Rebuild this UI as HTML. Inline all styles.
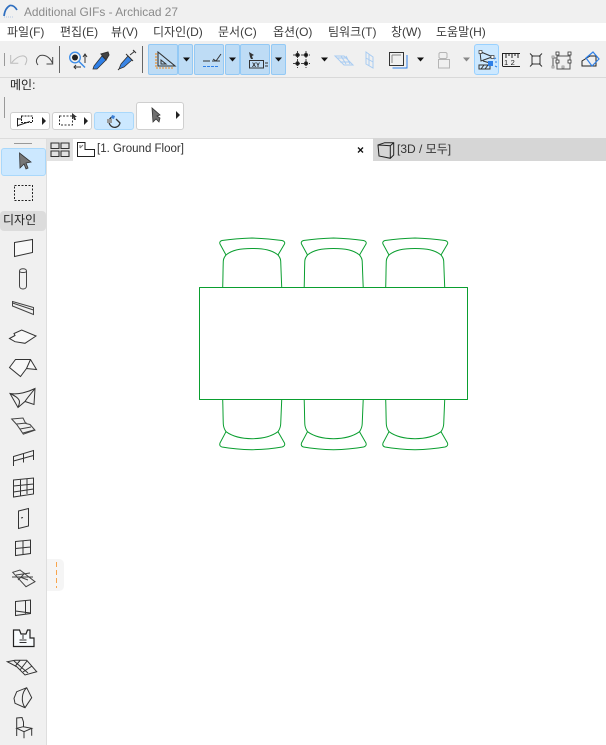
<!DOCTYPE html>
<html><head><meta charset="utf-8"><style>
html,body{margin:0;padding:0;background:#fff}
#p{position:relative;width:606px;height:745px;overflow:hidden;background:#fff;font-family:"Liberation Sans","Noto Sans CJK KR",sans-serif}
#p div{position:absolute}
.t{white-space:nowrap;font-size:12px;line-height:16px;color:#3c3c3c}
.b{background:#bedcf5;border:1px solid #93c9f5;border-radius:2px;box-sizing:border-box}
.w{background:#fff;border:1px solid #cfcfcf;border-radius:3px;box-sizing:border-box}
svg{position:absolute;left:0;top:0}
</style></head><body><div id="p">
<div style="left:0;top:0;width:606px;height:23px;background:#f0f0f0"></div>
<div style="left:0;top:41px;width:606px;height:97px;background:#f0f0f0"></div>
<div style="left:0;top:77px;width:606px;height:1px;background:#d9d9d9"></div>
<div style="left:0;top:138px;width:606px;height:1px;background:#dcdcdc"></div>
<div style="left:0;top:139px;width:46px;height:606px;background:#f0f0f0"></div>
<div style="left:46px;top:139px;width:1px;height:606px;background:#dedede"></div>
<div style="left:47px;top:139px;width:26px;height:22px;background:#e2e2e2"></div>
<div style="left:373px;top:138px;width:233px;height:23px;background:#d6d6d6"></div>
<div class="t" style="left:24px;top:4px;font-size:11.9px;color:#8a8a8a">Additional GIFs - Archicad 27</div>
<div class="t" style="left:7px;top:24px">파일(F)</div>
<div class="t" style="left:60px;top:24px">편집(E)</div>
<div class="t" style="left:111px;top:24px">뷰(V)</div>
<div class="t" style="left:153px;top:24px">디자인(D)</div>
<div class="t" style="left:218px;top:24px">문서(C)</div>
<div class="t" style="left:273px;top:24px">옵션(O)</div>
<div class="t" style="left:328px;top:24px">팀워크(T)</div>
<div class="t" style="left:391px;top:24px">창(W)</div>
<div class="t" style="left:436px;top:24px">도움말(H)</div>
<div class="b" style="left:148px;top:44px;width:30px;height:31px"></div>
<div class="b" style="left:178px;top:44px;width:15px;height:31px"></div>
<div class="b" style="left:194px;top:44px;width:30px;height:31px"></div>
<div class="b" style="left:225px;top:44px;width:15px;height:31px"></div>
<div class="b" style="left:240px;top:44px;width:30px;height:31px"></div>
<div class="b" style="left:271px;top:44px;width:15px;height:31px"></div>
<div class="b" style="left:474px;top:44px;width:25px;height:31px;background:#cce8ff;border-color:#99d1ff;border-radius:3px"></div>
<div class="t" style="left:10px;top:77px;color:#222">메인:</div>
<div class="w" style="left:10px;top:112px;width:40px;height:18px"></div>
<div class="w" style="left:52px;top:112px;width:40px;height:18px"></div>
<div class="w" style="left:94px;top:112px;width:40px;height:18px;background:#cce8ff;border-color:#a9d8fb"></div>
<div class="w" style="left:136px;top:102px;width:48px;height:28px"></div>
<div style="left:1px;top:148px;width:45px;height:28px;background:#cce8ff;border:1px solid #a9d8fb;border-radius:3px;box-sizing:border-box"></div>
<div style="left:0;top:211px;width:46px;height:20px;background:#dcdcdc;border-radius:4px"></div>
<div class="t" style="left:3px;top:212px;color:#222">디자인</div>
<div class="t" style="left:97px;top:141px;color:#333;font-size:11.5px">[1. Ground Floor]</div>
<div class="t" style="left:397px;top:141px;color:#333;font-size:12px">[3D / 모두]</div>
<div style="left:47px;top:559px;width:17px;height:32px;background:#f5f5f5;border-radius:0 5px 5px 0"></div>
<svg width="606" height="745" viewBox="0 0 606 745" fill="none" stroke="#333" stroke-width="1">
<!-- logo -->
<path d="M4 16Q5 8 10 5.500Q14 5 17 10" stroke="#2f6fc0" stroke-width="1.700"/>
<path d="M4 17h9" stroke="#c8d6e8" stroke-dasharray="1 1" stroke-width="1.500"/>
<!-- separators -->
<path d="M4.500 53v13M4.500 97v21" stroke="#999"/>
<path d="M59.500 46v27M142.500 46v27" stroke="#666"/>
<!-- undo redo -->
<path d="M10.700 55v8.300h7.600M11.700 62.700Q18 55 24 56Q29 58 25 65" stroke="#bcbcbc"/>
<path d="M38 65Q34 60 40 55.500Q48 54 52.500 63M52.700 57v7h-6.200" stroke="#444"/>
<!-- find -->
<circle cx="75" cy="57.500" r="5.300" stroke="#3b8ce8" stroke-width="1.300"/><circle cx="75" cy="57.500" r="3" fill="#222" stroke="none"/>
<path d="M79 61.500l6 6" stroke="#3b8ce8" stroke-width="1.500"/><path d="M85 55v8M83 57l2-3 2 3M74 67h7M76 65l-2 2 2 2" stroke="#333"/>
<!-- eyedropper -->
<path d="M94 66l8-10 4 4-9 9-4 0z" fill="#2f80e8" stroke="#333" stroke-width=".8"/><path d="M101 54l7-2 1 3-3 5z" fill="#444" stroke="#333"/>
<!-- syringe -->
<path d="M119 69l2-5 7-8 4 4-8 7z" fill="#3a85e5" stroke="#333" stroke-width=".8"/><path d="M126 54l7 7M130 55l5-4M133 50l3 3M119 69l-1 1" stroke="#333"/>
<!-- triangle ruler -->
<path d="M158 52v14h17z" stroke="#333" stroke-width="1.100"/><path d="M161 60v4h5z" stroke="#333"/><path d="M156 53v15h18" stroke="#f08a1c" stroke-dasharray="2 1" stroke-width="1.100"/>
<!-- guide -->
<path d="M203 61h7M212 61h8M213 59l3 2 5-7" stroke="#333"/><path d="M203 66.500h16" stroke="#2f80e8" stroke-dasharray="3 1"/>
<!-- XY -->
<path d="M249 52l5 3-2 1 1 3-2 0-1-2z" fill="#333" stroke="none"/><rect x="249.500" y="60.500" width="14" height="7.500" stroke="#333"/>
<path d="M265 63h3M265 66h3" stroke="#333"/>
<text x="252" y="67" font-size="6" font-weight="bold" fill="#222" stroke="none" font-family="Liberation Sans,sans-serif">XY</text>
<!-- arrows -->
<path fill="#111" stroke="none" d="M183 57.500h7l-3.500 4zM229 57.500h7l-3.500 4zM275 57.500h7l-3.500 4zM321 57.500h7l-3.500 4zM417 57.500h7l-3.500 4z"/>
<path fill="#888" stroke="none" d="M463 57.500h7l-3.500 4z"/>
<!-- grid -->
<path d="M297.500 51v17M306 51v17M293 55h17M293 63.500h17" stroke="#444" stroke-dasharray="3 1"/><circle cx="297.500" cy="55" r="1.700" fill="#111"/><circle cx="306" cy="55" r="1.700" fill="#111"/><circle cx="297.500" cy="63.500" r="1.700" fill="#111"/><circle cx="306" cy="63.500" r="1.700" fill="#111"/>
<!-- plane -->
<path d="M335 56h9l9 9h-9zM337 58h10M340 62h10M341 56l5 8M346 56l4 8" stroke="#a9ccf2"/>
<path d="M366 52l7 5v11l-7-4zM369 54v12M366 58l7 4" stroke="#a9ccf2"/>
<!-- box -->
<rect x="389.500" y="52.500" width="14" height="13" stroke="#333"/><path d="M392 55h9M392 55v8" stroke="#888"/><path d="M407 55v13h-14.500" stroke="#2f80e8"/>
<!-- lock/weight -->
<path d="M440 52.500h6l1 1v4l-1 1h-6l-1-1v-4zM438.500 59.500h11v8.500h-11z" stroke="#b5b5b5"/>
<!-- active wall -->
<path d="M481 52l12 5M480 52l1 9 11-4M483 61l7 2" stroke="#333"/><rect x="479" y="50.500" width="3" height="3" fill="#fff" stroke="#333" stroke-width=".7"/><rect x="491" y="55.500" width="3" height="3" fill="#fff" stroke="#333" stroke-width=".7"/>
<path d="M479 65h11v4h-11zM481 69l3-4M485 69l3-4" stroke="#333"/><rect x="488" y="61" width="5" height="5" fill="#2f80e8" stroke="none"/><path d="M495 62h2M495 66l2 1M494 59l2-1" stroke="#2f80e8"/>
<!-- ruler 12 -->
<path d="M502.500 66V53.500h17.500M502.500 66.500h17.500" stroke="#222"/><path d="M506 54v4M509 54v2M512 54v4M515 54v2M518 54v4" stroke="#222"/>
<text x="504" y="65" font-size="7.500" fill="#222" stroke="none" letter-spacing="2.500" font-family="Liberation Sans,sans-serif">12</text>
<!-- x box -->
<rect x="532" y="56" width="8" height="8" stroke="#333"/><path d="M530 53.500l3 3M542 53.500l-3 3M530 66.500l3-3M542 66.500l-3-3" stroke="#333"/>
<!-- grip box -->
<path d="M557 56h13v13h-13zM553 58h4M553 58v9" stroke="#555"/>
<g fill="#fff" stroke="#333" stroke-width=".8"><rect x="556" y="52" width="3" height="3"/><rect x="568" y="52" width="3" height="3"/><rect x="556" y="60" width="3" height="3"/><rect x="568" y="60" width="3" height="3"/></g>
<g fill="#fff" stroke="#888" stroke-width=".8"><rect x="552" y="56" width="2" height="2"/><rect x="552" y="66" width="2" height="2"/><rect x="562" y="66" width="2" height="2"/></g>
<!-- 3d -->
<path d="M582 66v-5l8-5h6v10z" stroke="#222"/><path d="M586 58l7-6 6 7-7 7z" stroke="#2f80e8" stroke-width="1.200"/>
<!-- info icons -->
<rect x="21.500" y="116" width="11" height="6.500" stroke="#222" stroke-dasharray="2 1"/><path d="M17.500 118v8.500M18 125.500l12-4M18 119h4" stroke="#222"/>
<path fill="#222" stroke="none" d="M42 117l4 4-4 4zM84 117l4 4-4 4zM176 111l4 4-4 4z"/>
<rect x="59.500" y="116" width="13" height="9" stroke="#333" stroke-dasharray="2 1.500"/><path d="M72 113l5 4-2 0 1 3-2 0-1-3-1 1z" fill="#333" stroke="none"/>
<path d="M112 117a5.500 5.500 0 1 0 8 6l-4-4" stroke="#333" stroke-width="1.300"/><rect x="107" y="119" width="5" height="4" fill="#999" stroke="none"/><path d="M112 115l3 1-1 3-3-1z" fill="#3b7fd6" stroke="none"/>
<path d="M152 108l1 14 3-3 3 3 1-4 -3 -2 3-1z" fill="#707070" stroke="#333" stroke-width=".8"/>
<!-- tab icons -->
<path d="M51 143h8v5.500h-8zM61 143h8v5.500h-8zM51 151h8v5.500h-8zM61 151h8v5.500h-8z" stroke="#333" stroke-width="1.100"/>
<path d="M77.500 142.500h7.500v7h9.500v7h-17z" stroke="#222"/><path d="M80 145v3M80 148l3-3" stroke="#777"/>
<path d="M358 147.500l5 5M363 147.500l-5 5" stroke="#111" stroke-width="1.300"/>
<path d="M378 145l6.700-2.300h9v12.300l-3.400 3.300-11.300-2.300zM390.300 158.300v-12.600l-12.300-.7M390.300 145.700l3.400-3" stroke="#222"/>
<!-- sidebar -->
<path d="M14 143.500h18" stroke="#999"/>
<path d="M19.500 153l.5 15 4-4 2 5 2-1-2-5 5-1z" fill="#777" stroke="#333" stroke-width=".8"/>
<rect x="14.500" y="185.500" width="18" height="15" stroke="#222" stroke-dasharray="2 1.500"/>
<path d="M14.500 242.500l18-3v13l-18 4z" fill="#f8f8f8" stroke="#333"/>
<path d="M19.500 271v15c0 4 7 4 7 0v-15c0-3-7-3-7 0zM19.500 271c0 2 7 2 7 0" stroke="#444"/>
<path d="M12.500 301.500l21 6v7l-21-8.500zM12.500 303l21 7" stroke="#444"/>
<path d="M9.500 338.500l5.500-3-1-2 7.700-3.500 14.300 6-11 7.300-10-1.600z" fill="#f8f8f8" stroke="#333"/>
<path d="M9.500 367.500l6-8h15l6 10-10-1-6 8zM30.500 359.500l-4 9" stroke="#333" fill="#f8f8f8"/>
<path d="M10 393.500C18 395 28 392 35 388.500l-1 16-9-3-7 6zM35 388.500C30 395 27 398 25 401.500M18 407.500C20 402 22 399 10 393.500" stroke="#333"/>
<path d="M11.700 419l11.300-1 2.700 5.500 4.300 1 5 5.700-11.700 4-3.300-5-3.300-4.700zM16.700 424l10-1M20 429l11-2M23 433l11-3" stroke="#444"/>
<path d="M13.500 466v-9.500l20-6V460M13.500 461l20-5.500M23.500 453.500v9" stroke="#333"/>
<path d="M13.500 480l20-2v16l-20 3zM13.500 486l20-2M13.500 492l20-3M20.500 479.500v16M27 479v15" stroke="#333"/>
<path d="M18.500 511l10-2.500v17.500l-10 2.500zM21 518l2-.5" stroke="#333"/>
<path d="M15.500 541.500l15-1.500v13.500l-15 2zM15.500 548.500l15-1.500M23 541v14" stroke="#333"/>
<path d="M12.700 572.300l7.300-2.300 15 11.700-9 5zM12 577l21 0M16 575l14-2M20 577l8 3M25 573l-7 7" stroke="#444"/>
<path d="M15.500 601.500l15-1.500v13.500l-15 2zM25.500 600.500v13M15.500 611l15 2" stroke="#333"/>
<path d="M13.500 630h6l1.500 4h5l1.500-4h2.500v8h4v8.500H13.500z" fill="#f8fbfd" stroke="#222" stroke-width="1.200"/><path d="M23 635v4M19.500 640h7M19.500 642.500h7" stroke="#333"/>
<path d="M7.300 661.700L15 660.300h11.700l10 11.400-11.700 3.300-8.300-8.300zM14 661l14 12M20 660.500l-5 6M27 661l-7 9M32 666l-9 6" stroke="#333"/>
<path d="M14 698.300l2.700-6.600 10-4 5 10-6.700 10-10-4.400zM26.700 687.700C22 692 20.500 701 25 707.700" stroke="#333"/>
<path d="M16.700 736v-18l5.300-.5 1.500 4.500v5M16.700 728.300l6.600-1.600 8.400 1.600-7.700 3.400zM31.700 728.300v7.400M24 731.700v6.600" stroke="#333"/>
<!-- orange dashes -->
<path d="M56.500 562v26" stroke="#f8a54d" stroke-dasharray="5 3"/>
<!-- plan -->
<g stroke="#0a9e2f" stroke-width="1" stroke-linejoin="round" stroke-linecap="round">
<rect x="199.500" y="287.500" width="268" height="112"/>
<g id="c">
<path d="M222.700 287C223 278 223 268 223.300 261Q223.500 258 226 255C232 250 240 248.500 252 248.500C264 248.500 272 250 278 255Q280.500 258 280.700 261C281 268 281.300 278 281.700 287"/>
<path d="M226 255L220 244Q219 241.500 222 240.500Q236 238.500 252 238Q268 238.500 282 240.500Q285.500 241.500 284.500 244L278 255"/>
<path d="M222.700 400C223 408 223 416 223.300 424Q223.500 428 226 431.700C232 436 240 438.700 252 438.700C264 438.700 272 436 278 431.700Q280.500 428 280.700 424C281 416 281.300 408 281.700 400"/>
<path d="M226 431.700L220 443Q219 446 222 447Q236 449.500 252 449.700Q268 449.500 282 447Q285.500 446 284.500 443L278 431.700"/>
</g>
<use href="#c" x="81.500"/><use href="#c" x="163"/>
</g>
</svg>
</div></body></html>
